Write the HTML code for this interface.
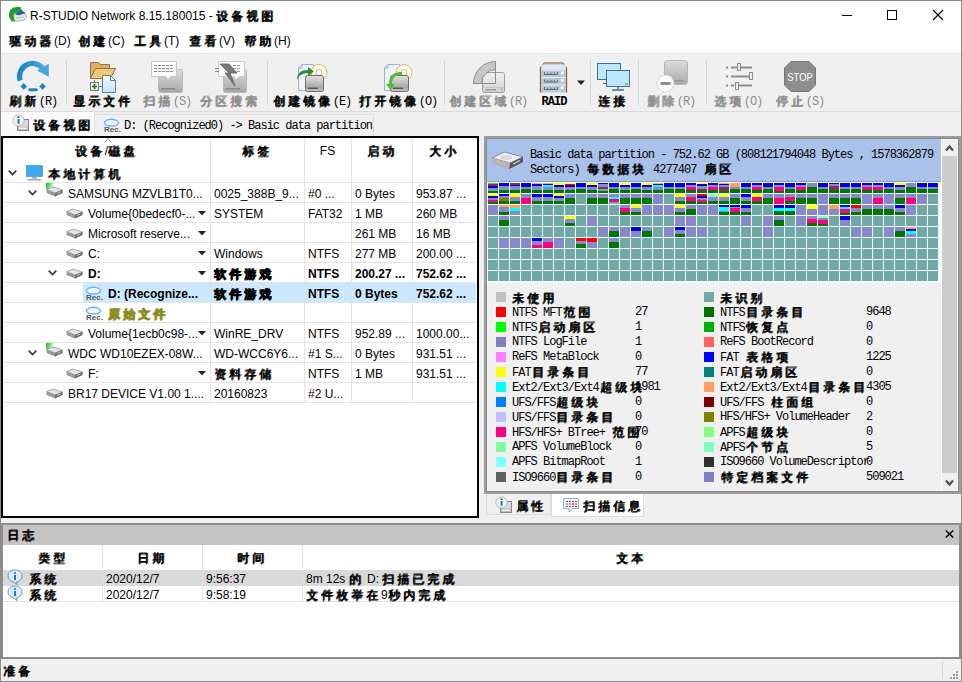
<!DOCTYPE html><html><head><meta charset="utf-8"><style>
*{box-sizing:border-box;margin:0;padding:0}
html,body{width:962px;height:682px;overflow:hidden;background:#f0f0f0}
body{position:relative;font-family:"Liberation Sans",sans-serif;font-size:12px;color:#000}
.a{position:absolute}
.t{position:absolute;white-space:nowrap;line-height:16px}
.m{font-family:"Liberation Mono",monospace;font-size:12px;letter-spacing:-1px;line-height:14px;position:absolute;white-space:nowrap}
.dis{color:#8c8c8c}
svg{position:absolute;overflow:visible}
.cell{position:absolute;width:10px;height:10px;display:flex;flex-direction:column;overflow:hidden}
.cell i{display:block}
.cj{letter-spacing:3px;text-shadow:1px 0 0 currentColor,0 1px 0 currentColor}
.m .cj{font-family:"Liberation Sans",sans-serif;letter-spacing:3px;margin-left:1px}
</style></head><body><div class="a" style="left:0px;top:0px;width:962px;height:53px;background:#fff"></div>
<div class="a" style="left:0px;top:53px;width:962px;height:1px;background:#e6e6e6"></div>
<svg style="left:8px;top:6px" width="19" height="17" viewBox="0 0 19 17">
<path d="M6 8.5 L17.5 7.5 L18.5 11 L17 14 L7.5 15.5 L5.5 13 Z" fill="#e3e9f0" stroke="#7f8a96" stroke-width="0.6"/>
<path d="M7 7.5 L13 3.5 L17.5 7 L10 9.5 Z" fill="#2a5fb5"/>
<path d="M1 9 C1 4 4 1 9 1 L12.5 1 L13.5 4 L9.5 6.5 C7 6.5 5.5 8 5.5 10 L7 15.5 L4 15.5 C2 13.5 1 11.5 1 9 Z" fill="#2b9c2b"/>
<path d="M8 12 L16 11" stroke="#aab4c0" stroke-width="0.8"/>
</svg>
<div class="t" style="left:30px;top:8px;">R-STUDIO Network 8.15.180015 - <span class="cj">设备视图</span></div>
<div class="a" style="left:842px;top:15px;width:10px;height:1px;background:#000"></div>
<div class="a" style="left:887px;top:10px;width:10px;height:10px;border:1px solid #000"></div>
<svg style="left:933px;top:10px" width="10" height="10" viewBox="0 0 10 10"><path d="M0 0 L10 10 M10 0 L0 10" stroke="#000" stroke-width="1.1"/></svg>
<div class="t" style="left:9px;top:33px;"><span class="cj">驱动器</span>(D)</div>
<div class="t" style="left:78px;top:33px;"><span class="cj">创建</span>(C)</div>
<div class="t" style="left:134px;top:33px;"><span class="cj">工具</span>(T)</div>
<div class="t" style="left:189px;top:33px;"><span class="cj">查看</span>(V)</div>
<div class="t" style="left:244px;top:33px;"><span class="cj">帮助</span>(H)</div>
<div class="a" style="left:0px;top:54px;width:962px;height:57px;background:#f0f0f0"></div>
<div class="a" style="left:0px;top:111px;width:962px;height:1px;background:#dadada"></div>
<div class="a" style="left:66px;top:60px;width:1px;height:45px;background:#d6d6d6"></div>
<div class="a" style="left:267px;top:60px;width:1px;height:45px;background:#d6d6d6"></div>
<div class="a" style="left:444px;top:60px;width:1px;height:45px;background:#d6d6d6"></div>
<div class="a" style="left:590px;top:60px;width:1px;height:45px;background:#d6d6d6"></div>
<div class="a" style="left:638px;top:60px;width:1px;height:45px;background:#d6d6d6"></div>
<div class="a" style="left:706px;top:60px;width:1px;height:45px;background:#d6d6d6"></div>
<div class="t" style="left:-17px;top:93px;width:100px;text-align:center"><span class="cj">刷新</span><span style="font-family:&quot;Liberation Mono&quot;,monospace;letter-spacing:-1px">(R)</span></div>
<div class="t" style="left:53px;top:93px;width:100px;text-align:center"><span class="cj">显示文件</span></div>
<div class="t dis" style="left:117px;top:93px;width:100px;text-align:center"><span class="cj">扫描</span><span style="font-family:&quot;Liberation Mono&quot;,monospace;letter-spacing:-1px">(S)</span></div>
<div class="t dis" style="left:180px;top:93px;width:100px;text-align:center"><span class="cj">分区搜索</span></div>
<div class="t" style="left:262px;top:93px;width:100px;text-align:center"><span class="cj">创建镜像</span><span style="font-family:&quot;Liberation Mono&quot;,monospace;letter-spacing:-1px">(E)</span></div>
<div class="t" style="left:348px;top:93px;width:100px;text-align:center"><span class="cj">打开镜像</span><span style="font-family:&quot;Liberation Mono&quot;,monospace;letter-spacing:-1px">(O)</span></div>
<div class="t dis" style="left:438px;top:93px;width:100px;text-align:center"><span class="cj">创建区域</span><span style="font-family:&quot;Liberation Mono&quot;,monospace;letter-spacing:-1px">(R)</span></div>
<div class="t" style="left:504px;top:93px;width:100px;text-align:center"><span style="font-family:&quot;Liberation Mono&quot;,monospace;letter-spacing:-1px;font-weight:bold">RAID</span></div>
<div class="t" style="left:563px;top:93px;width:100px;text-align:center"><span class="cj">连接</span></div>
<div class="t dis" style="left:621px;top:93px;width:100px;text-align:center"><span class="cj">删除</span><span style="font-family:&quot;Liberation Mono&quot;,monospace;letter-spacing:-1px">(R)</span></div>
<div class="t dis" style="left:688px;top:93px;width:100px;text-align:center"><span class="cj">选项</span><span style="font-family:&quot;Liberation Mono&quot;,monospace;letter-spacing:-1px">(O)</span></div>
<div class="t dis" style="left:750px;top:93px;width:100px;text-align:center"><span class="cj">停止</span><span style="font-family:&quot;Liberation Mono&quot;,monospace;letter-spacing:-1px">(S)</span></div>

<svg style="left:0;top:0" width="962" height="112" viewBox="0 0 962 112">
<defs>
<linearGradient id="gdrv" x1="0" y1="0" x2="0" y2="1"><stop offset="0" stop-color="#dcdcdc"/><stop offset="1" stop-color="#a8a8a8"/></linearGradient>
<linearGradient id="gdrv2" x1="0" y1="0" x2="0" y2="1"><stop offset="0" stop-color="#e2e2e2"/><stop offset="0.75" stop-color="#a8a8a8"/><stop offset="1" stop-color="#c8c8c8"/></linearGradient>
<linearGradient id="gdoc" x1="0" y1="0" x2="0" y2="1"><stop offset="0" stop-color="#f4f9fd"/><stop offset="1" stop-color="#c8e0f2"/></linearGradient>
</defs>
<!-- refresh -->
<linearGradient id="grf" x1="0" y1="0" x2="1" y2="0.3"><stop offset="0" stop-color="#1a7fc2"/><stop offset="1" stop-color="#4aaae2"/></linearGradient>
<path d="M20.2 80.7 A13 13 0 0 1 43.15 69.04" fill="none" stroke="url(#grf)" stroke-width="5.2"/>
<path d="M48.8 63.8 L48.8 76.8 L37 70.6 Z" fill="#45a6de"/>
<path d="M20.4 86.4 L23.7 83.1 L27 86.4 L23.7 89.7 Z" fill="#1f86c4"/>
<path d="M39.2 86.4 L42.5 83.1 L45.8 86.4 L42.5 89.7 Z" fill="#1f86c4"/>
<rect x="28.2" y="88.2" width="9.7" height="3" rx="1.5" fill="#1f86c4"/>
<!-- show files -->
<path d="M90.5 62.5 H98.5 L100.5 64.5 H109.5 V78.5 H90.5 Z" fill="#e2ad60" stroke="#8a7654"/>
<path d="M90.5 78.5 L95.5 68.5 H115.5 L110.5 78.5 Z" fill="#f2c877" stroke="#8a7654"/>
<path d="M102.5 75.5 H110.5 L115.5 80.5 V92.5 H102.5 Z" fill="url(#gdoc)" stroke="#5a7f8e"/>
<path d="M110.5 75.5 V80.5 H115.5" fill="none" stroke="#5a7f8e"/>
<rect x="90.5" y="82.5" width="8" height="8" fill="#e8f4e8" stroke="#777"/>
<path d="M94.5 84 V89 M92 86.5 H97" stroke="#1a7a1a" stroke-width="1.6"/>
<path d="M94.5 80 V82.5 M98.5 86.5 H102" stroke="#777"/>
<!-- scan (disabled) -->
<rect x="158.5" y="69.5" width="24" height="23" rx="2" fill="url(#gdrv)" stroke="#b8b8b8"/>
<rect x="161" y="88" width="14" height="1.5" fill="#8a8a8a"/>
<path d="M151.5 61.5 H176.5 V76.5 H171 L168 80 L166 76.5 H151.5 Z" fill="#fbfbfb" stroke="#c8c8c8"/>
<path d="M154 65.5h3 M158 65.5h3 M162 65.5h3 M166 65.5h3 M170 65.5h3 M154 68.5h3 M158 68.5h3 M162 68.5h3 M166 68.5h3 M170 68.5h3 M154 71.5h3 M158 71.5h3 M162 71.5h3 M166 71.5h3 M170 71.5h3" stroke="#8a8a8a" stroke-width="1.2"/>
<!-- partition search (disabled) -->
<rect x="223.5" y="69.5" width="23" height="23" rx="2" fill="url(#gdrv)" stroke="#b8b8b8"/>
<rect x="226" y="88" width="14" height="1.5" fill="#8a8a8a"/>
<path d="M218.5 61.5 H244.5 V76.5 H239 L236 80 L234 76.5 H218.5 Z" fill="#fbfbfb" stroke="#c8c8c8"/>
<path d="M233 65.5h3 M237 65.5h3 M233 68.5h3 M237 68.5h3 M233 71.5h3 M237 71.5h3" stroke="#9a9a9a" stroke-width="1.2"/>
<path d="M220 64 H229 L237 73 H230 L235 86 L225 73 H229 Z" fill="#7a7a7a" stroke="#5e5e5e" stroke-width="0.8"/>
<path d="M215 68.5h4 M215 71.5h4" stroke="#8a8a8a" stroke-width="1.2"/>
<!-- create image -->
<path d="M302 64.5 H313.5 V90.5 H298.5 V68 Z M302 64.5 V68 H298.5" fill="#eef4fb" stroke="#9bb1d0"/>
<circle cx="319" cy="72.5" r="8" fill="#fffbe6" stroke="#c9bb7a"/>
<circle cx="319" cy="72.5" r="3" fill="#fff" stroke="#c9bb7a"/>
<rect x="305.5" y="75.5" width="18" height="16" rx="2" fill="url(#gdrv2)" stroke="#6e6e6e"/>
<rect x="308" y="87.5" width="10" height="1.5" fill="#555"/>
<path d="M297 80 C297 73 301 70 308 70 V67 L314 71.5 L308 76 V73 C303 73 299 75 297 80 Z" fill="#2f8f2f"/>
<!-- open image -->
<path d="M388 64.5 H399.5 V90.5 H384.5 V68 Z M388 64.5 V68 H384.5" fill="#eef4fb" stroke="#9bb1d0"/>
<circle cx="404" cy="72.5" r="8" fill="#fffbe6" stroke="#c9bb7a"/>
<circle cx="404" cy="72.5" r="3" fill="#fff" stroke="#c9bb7a"/>
<rect x="390.5" y="75.5" width="18" height="16" rx="2" fill="url(#gdrv2)" stroke="#6e6e6e"/>
<rect x="393" y="87.5" width="10" height="1.5" fill="#555"/>
<path d="M402 72 C395 72 389 74 389 84 H386 L390.5 90 L395 84 H392 C392 77 396 75 402 75 Z" fill="#55b83a"/>
<!-- create region (disabled) -->
<linearGradient id="gcr" x1="0" y1="0" x2="0" y2="1"><stop offset="0" stop-color="#f2f2f2"/><stop offset="1" stop-color="#d2d2d2"/></linearGradient>
<rect x="482.5" y="72.5" width="22" height="20" rx="2" fill="url(#gcr)" stroke="#9c9c9c"/>
<path d="M483 87.5 H504" stroke="#c4c4c4"/>
<rect x="485" y="89" width="11" height="1.6" fill="#a0a0a0"/>
<rect x="501" y="88.6" width="1.6" height="1.6" fill="#a0a0a0"/>
<path d="M473.5 83.5 A22 22 0 0 1 495.5 61.5 V69.5 A14 14 0 0 0 481.5 83.5 Z" fill="#c6c6c6" stroke="#8c8c8c"/>
<path d="M481.5 83.5 H495.5 V69.5" fill="none" stroke="#8c8c8c"/>
<!-- RAID -->
<path d="M540.5 92.5 V68 L544 63.5 H563 L566.5 68 V92.5" fill="#c0cedb" stroke="#a9532c" stroke-width="1.3"/>
<rect x="544" y="62" width="19" height="2" fill="#b99a92"/>
<rect x="541.2" y="64.5" width="24.6" height="5" fill="#dfeaf5"/>
<rect x="541.2" y="69.5" width="24.6" height="7" fill="#b9c8d6"/><rect x="541.2" y="69.5" width="24.6" height="1" fill="#eaf1f8"/><path d="M544.5 72.0 V74.5 H557.5 V72.0 M547.7 72.5 V74.5 M551 72.5 V74.5 M554.3 72.5 V74.5" stroke="#5e6c7c" stroke-width="1" fill="none"/><rect x="561" y="71.5" width="2.6" height="2.6" fill="#fff"/><rect x="541.2" y="77" width="24.6" height="7" fill="#b9c8d6"/><rect x="541.2" y="77" width="24.6" height="1" fill="#eaf1f8"/><path d="M544.5 79.5 V82 H557.5 V79.5 M547.7 80 V82 M551 80 V82 M554.3 80 V82" stroke="#5e6c7c" stroke-width="1" fill="none"/><rect x="561" y="79" width="2.6" height="2.6" fill="#fff"/><rect x="541.2" y="84.5" width="24.6" height="7" fill="#b9c8d6"/><rect x="541.2" y="84.5" width="24.6" height="1" fill="#eaf1f8"/><path d="M544.5 87.0 V89.5 H557.5 V87.0 M547.7 87.5 V89.5 M551 87.5 V89.5 M554.3 87.5 V89.5" stroke="#5e6c7c" stroke-width="1" fill="none"/><rect x="561" y="86.5" width="2.6" height="2.6" fill="#fff"/>
<path d="M577 80.5 H585 L581 85 Z" fill="#222"/>
<!-- connect -->
<rect x="597.5" y="63.5" width="23" height="16" fill="#bfe6fb" stroke="#3b6e8f"/>
<path d="M607 80v3 M603 83.5h8" stroke="#3b6e8f"/>
<rect x="606.5" y="70.5" width="23" height="16" fill="#bfe6fb" stroke="#3b6e8f"/>
<path d="M618 86.5v3 M612 90h12" stroke="#3b6e8f" stroke-width="1.4"/>
<rect x="625" y="83" width="3" height="2" fill="#8bc34a"/>
<!-- delete (disabled) -->
<rect x="664.5" y="60.5" width="23" height="24" rx="3" fill="url(#gdrv)" stroke="#b5b5b5"/>
<rect x="670" y="80" width="14" height="1.5" fill="#999"/>
<circle cx="665.5" cy="83.5" r="8.5" fill="#fff" stroke="#d0d0d0"/>
<rect x="660.5" y="82" width="10" height="3" fill="#8c8c8c"/>
<!-- options (disabled) -->
<path d="M726 67.5h2 M731 67.5h6 M741 67.5h11 M726 76.5h2 M731 76.5h18 M726 85.5h2 M731 85.5h3 M739 85.5h13" stroke="#8c8c8c" stroke-width="1.8"/>
<rect x="737.5" y="63.5" width="3" height="7" fill="#ececec" stroke="#8c8c8c"/>
<rect x="749.5" y="72.5" width="3" height="7" fill="#ececec" stroke="#8c8c8c"/>
<rect x="735.5" y="82.5" width="3" height="7" fill="#ececec" stroke="#8c8c8c"/>
<!-- stop (disabled) -->
<path d="M791 61.5 H809 L815.5 68 V85 L809 91.5 H791 L784.5 85 V68 Z" fill="#8e8e8e" stroke="#777"/>
<text x="800" y="81" font-family="Liberation Sans" font-size="11" fill="#fff" text-anchor="middle" transform="translate(800 0) scale(0.85 1) translate(-800 0)">STOP</text>
</svg>

<div class="a" style="left:0px;top:112px;width:962px;height:24px;background:#f0f0f0"></div>
<div class="a" style="left:1px;top:112px;width:94px;height:24px;background:#fafafa;border-right:1px solid #dcdcdc"></div>
<div class="a" style="left:95px;top:114px;width:279px;height:22px;background:#f0f0f0;border:1px solid #dcdcdc;border-bottom:none;border-left:none"></div>
<svg style="left:12px;top:114px" width="18" height="18" viewBox="0 0 18 18">
<rect x="5.5" y="5.5" width="11" height="11" fill="#dadada" stroke="#8a8a8a"/><rect x="6.5" y="13" width="9" height="2.5" fill="#f2f2f2" stroke="#a0a0a0" stroke-width="0.6"/>
<circle cx="6.5" cy="6.5" r="5.6" fill="#eef3f8" stroke="#a8b4c4" stroke-width="0.9"/><rect x="5.6" y="5" width="1.9" height="4.8" fill="#3b6d85"/><rect x="5.6" y="2.4" width="1.9" height="1.6" fill="#3b5560"/>
</svg>
<div class="t" style="left:33px;top:117px;"><span class="cj">设备视图</span></div>
<svg style="left:103px;top:116px" width="18" height="18" viewBox="0 0 18 18">
<path d="M1.5 6 L4 4 L8.5 3 L13 4 L15.5 6 L15.5 7.5 L13 9.5 L8.5 10 L4 9.5 L1.5 7.5 Z" fill="#eef7ff" stroke="#6cb4ee" stroke-width="1.3"/>
<text x="1" y="15.5" font-family="Liberation Sans" font-size="8" font-weight="bold" fill="#505a60">Rec.</text>
</svg>
<div class="m" style="left:124px;top:119px;">D: (Recognized0) -&gt; Basic data partition</div>
<div class="a" style="left:1px;top:136px;width:478px;height:382px;background:#fff;border:2px solid #000"></div>
<div class="t" style="left:3px;top:143px;width:207px;text-align:center"><span class="cj">设备</span>/<span class="cj">磁盘</span></div>
<svg style="left:104px;top:138px" width="8" height="5" viewBox="0 0 8 5"><path d="M0.5 4.5 L4 0.8 L7.5 4.5" fill="none" stroke="#8a8a8a"/></svg>
<div class="t" style="left:210px;top:143px;width:94px;text-align:center"><span class="cj">标签</span></div>
<div class="t" style="left:304px;top:143px;width:47px;text-align:center">FS</div>
<div class="t" style="left:351px;top:143px;width:61px;text-align:center"><span class="cj">启动</span></div>
<div class="t" style="left:412px;top:143px;width:64px;text-align:center"><span class="cj">大小</span></div>
<div class="a" style="left:210px;top:138px;width:1px;height:265px;background:#e4e4e4"></div>
<div class="a" style="left:304px;top:138px;width:1px;height:265px;background:#e4e4e4"></div>
<div class="a" style="left:351px;top:138px;width:1px;height:265px;background:#e4e4e4"></div>
<div class="a" style="left:412px;top:138px;width:1px;height:265px;background:#e4e4e4"></div>
<div class="a" style="left:3px;top:182px;width:473px;height:1px;background:#e4e4e4"></div>
<div class="a" style="left:3px;top:202px;width:473px;height:1px;background:#e4e4e4"></div>
<div class="a" style="left:3px;top:222px;width:473px;height:1px;background:#e4e4e4"></div>
<div class="a" style="left:3px;top:242px;width:473px;height:1px;background:#e4e4e4"></div>
<div class="a" style="left:3px;top:262px;width:473px;height:1px;background:#e4e4e4"></div>
<div class="a" style="left:3px;top:282px;width:473px;height:1px;background:#e4e4e4"></div>
<div class="a" style="left:3px;top:302px;width:473px;height:1px;background:#e4e4e4"></div>
<div class="a" style="left:3px;top:322px;width:473px;height:1px;background:#e4e4e4"></div>
<div class="a" style="left:3px;top:342px;width:473px;height:1px;background:#e4e4e4"></div>
<div class="a" style="left:3px;top:362px;width:473px;height:1px;background:#e4e4e4"></div>
<div class="a" style="left:3px;top:382px;width:473px;height:1px;background:#e4e4e4"></div>
<div class="a" style="left:3px;top:402px;width:473px;height:1px;background:#e4e4e4"></div>
<div class="a" style="left:83px;top:283px;width:393px;height:19px;background:#cce8ff"></div>
<svg style="left:8px;top:170px" width="9" height="6" viewBox="0 0 9 6"><path d="M0.7 0.7 L4.5 4.5 L8.3 0.7" fill="none" stroke="#3a3a3a" stroke-width="1.7"/></svg>
<svg style="left:26px;top:165px" width="17" height="16" viewBox="0 0 17 16"><rect x="0.5" y="0.5" width="16" height="11" fill="#3ea8f0" stroke="#2e8ad0" stroke-width="0.6"/><rect x="6" y="12" width="5" height="1.5" fill="#9aa"/><rect x="2" y="14" width="13" height="1.5" fill="#9aa"/></svg>
<div class="t" style="left:48px;top:166px;color:#000"><span class="cj">本地计算机</span></div>
<svg style="left:28px;top:190px" width="9" height="6" viewBox="0 0 9 6"><path d="M0.7 0.7 L4.5 4.5 L8.3 0.7" fill="none" stroke="#3a3a3a" stroke-width="1.7"/></svg>
<svg style="left:46px;top:185px" width="17" height="12" viewBox="0 0 17 12">
<defs><linearGradient id="gg" x1="0" y1="0" x2="1" y2="0.4"><stop offset="0" stop-color="#20b020"/><stop offset="0.5" stop-color="#70e070"/><stop offset="1" stop-color="#d8f8d8" stop-opacity="0"/></linearGradient></defs><rect x="0" y="-2" width="9" height="7" fill="url(#gg)"/><path d="M0.5 4.5 L7 2 L16.5 5 L16.5 8 L9 11.5 L0.5 8 Z" fill="#9a9a9a"/>
<path d="M0.5 4.5 L7 2 L16.5 5 L9 8 Z" fill="#e4e4e4" stroke="#8a8a8a" stroke-width="0.6"/>
<path d="M9 8 L16.5 5 L16.5 8 L9 11.5 Z" fill="#6f6f6f"/>
<path d="M11 8.5 L14.5 7" stroke="#ddd" stroke-width="0.8"/>
</svg>
<div class="t" style="left:68px;top:186px;color:#000">SAMSUNG MZVLB1T0...</div>
<div class="t" style="left:214px;top:186px;">0025_388B_9...</div>
<div class="t" style="left:308px;top:186px;">#0 ...</div>
<div class="t" style="left:355px;top:186px;">0 Bytes</div>
<div class="t" style="left:416px;top:186px;">953.87 ...</div>
<svg style="left:66px;top:207px" width="17" height="12" viewBox="0 0 17 12">
<path d="M0.5 4.5 L7 2 L16.5 5 L16.5 8 L9 11.5 L0.5 8 Z" fill="#9a9a9a"/>
<path d="M0.5 4.5 L7 2 L16.5 5 L9 8 Z" fill="#e4e4e4" stroke="#8a8a8a" stroke-width="0.6"/>
<path d="M9 8 L16.5 5 L16.5 8 L9 11.5 Z" fill="#6f6f6f"/>
<path d="M11 8.5 L14.5 7" stroke="#ddd" stroke-width="0.8"/>
</svg>
<div class="t" style="left:88px;top:206px;color:#000">Volume{0bedecf0-...</div>
<svg style="left:198px;top:211px" width="8" height="5" viewBox="0 0 8 5"><path d="M0 0 H8 L4 4.5 Z" fill="#222"/></svg>
<div class="t" style="left:214px;top:206px;">SYSTEM</div>
<div class="t" style="left:308px;top:206px;">FAT32</div>
<div class="t" style="left:355px;top:206px;">1 MB</div>
<div class="t" style="left:416px;top:206px;">260 MB</div>
<svg style="left:66px;top:227px" width="17" height="12" viewBox="0 0 17 12">
<path d="M0.5 4.5 L7 2 L16.5 5 L16.5 8 L9 11.5 L0.5 8 Z" fill="#9a9a9a"/>
<path d="M0.5 4.5 L7 2 L16.5 5 L9 8 Z" fill="#e4e4e4" stroke="#8a8a8a" stroke-width="0.6"/>
<path d="M9 8 L16.5 5 L16.5 8 L9 11.5 Z" fill="#6f6f6f"/>
<path d="M11 8.5 L14.5 7" stroke="#ddd" stroke-width="0.8"/>
</svg>
<div class="t" style="left:88px;top:226px;color:#000">Microsoft reserve...</div>
<svg style="left:198px;top:231px" width="8" height="5" viewBox="0 0 8 5"><path d="M0 0 H8 L4 4.5 Z" fill="#222"/></svg>
<div class="t" style="left:355px;top:226px;">261 MB</div>
<div class="t" style="left:416px;top:226px;">16 MB</div>
<svg style="left:66px;top:247px" width="17" height="12" viewBox="0 0 17 12">
<path d="M0.5 4.5 L7 2 L16.5 5 L16.5 8 L9 11.5 L0.5 8 Z" fill="#9a9a9a"/>
<path d="M0.5 4.5 L7 2 L16.5 5 L9 8 Z" fill="#e4e4e4" stroke="#8a8a8a" stroke-width="0.6"/>
<path d="M9 8 L16.5 5 L16.5 8 L9 11.5 Z" fill="#6f6f6f"/>
<path d="M11 8.5 L14.5 7" stroke="#ddd" stroke-width="0.8"/>
</svg>
<div class="t" style="left:88px;top:246px;color:#000">C:</div>
<svg style="left:198px;top:251px" width="8" height="5" viewBox="0 0 8 5"><path d="M0 0 H8 L4 4.5 Z" fill="#222"/></svg>
<div class="t" style="left:214px;top:246px;">Windows</div>
<div class="t" style="left:308px;top:246px;">NTFS</div>
<div class="t" style="left:355px;top:246px;">277 MB</div>
<div class="t" style="left:416px;top:246px;">200.00 ...</div>
<svg style="left:48px;top:270px" width="9" height="6" viewBox="0 0 9 6"><path d="M0.7 0.7 L4.5 4.5 L8.3 0.7" fill="none" stroke="#3a3a3a" stroke-width="1.7"/></svg>
<svg style="left:66px;top:267px" width="17" height="12" viewBox="0 0 17 12">
<path d="M0.5 4.5 L7 2 L16.5 5 L16.5 8 L9 11.5 L0.5 8 Z" fill="#9a9a9a"/>
<path d="M0.5 4.5 L7 2 L16.5 5 L9 8 Z" fill="#e4e4e4" stroke="#8a8a8a" stroke-width="0.6"/>
<path d="M9 8 L16.5 5 L16.5 8 L9 11.5 Z" fill="#6f6f6f"/>
<path d="M11 8.5 L14.5 7" stroke="#ddd" stroke-width="0.8"/>
</svg>
<div class="t" style="left:88px;top:266px;font-weight:bold;color:#000">D:</div>
<svg style="left:198px;top:271px" width="8" height="5" viewBox="0 0 8 5"><path d="M0 0 H8 L4 4.5 Z" fill="#222"/></svg>
<div class="t" style="left:214px;top:266px;font-weight:bold;"><span class="cj">软件游戏</span></div>
<div class="t" style="left:308px;top:266px;font-weight:bold;">NTFS</div>
<div class="t" style="left:355px;top:266px;font-weight:bold;">200.27 ...</div>
<div class="t" style="left:416px;top:266px;font-weight:bold;">752.62 ...</div>
<svg style="left:85px;top:284px" width="18" height="18" viewBox="0 0 18 18">
<path d="M1.5 6 L4 4 L8.5 3 L13 4 L15.5 6 L15.5 7.5 L13 9.5 L8.5 10 L4 9.5 L1.5 7.5 Z" fill="#eef7ff" stroke="#6cb4ee" stroke-width="1.3"/>
<text x="1" y="15.5" font-family="Liberation Sans" font-size="8" font-weight="bold" fill="#505a60">Rec.</text>
</svg>
<div class="t" style="left:108px;top:286px;font-weight:bold;color:#000">D: (Recognize...</div>
<div class="t" style="left:214px;top:286px;font-weight:bold;"><span class="cj">软件游戏</span></div>
<div class="t" style="left:308px;top:286px;font-weight:bold;">NTFS</div>
<div class="t" style="left:355px;top:286px;font-weight:bold;">0 Bytes</div>
<div class="t" style="left:416px;top:286px;font-weight:bold;">752.62 ...</div>
<svg style="left:85px;top:304px" width="18" height="18" viewBox="0 0 18 18">
<path d="M1.5 6 L4 4 L8.5 3 L13 4 L15.5 6 L15.5 7.5 L13 9.5 L8.5 10 L4 9.5 L1.5 7.5 Z" fill="#eef7ff" stroke="#6cb4ee" stroke-width="1.3"/>
<text x="1" y="15.5" font-family="Liberation Sans" font-size="8" font-weight="bold" fill="#505a60">Rec.</text>
</svg>
<div class="t" style="left:108px;top:306px;font-weight:bold;color:#8b8b1e"><span class="cj">原始文件</span></div>
<svg style="left:66px;top:327px" width="17" height="12" viewBox="0 0 17 12">
<path d="M0.5 4.5 L7 2 L16.5 5 L16.5 8 L9 11.5 L0.5 8 Z" fill="#9a9a9a"/>
<path d="M0.5 4.5 L7 2 L16.5 5 L9 8 Z" fill="#e4e4e4" stroke="#8a8a8a" stroke-width="0.6"/>
<path d="M9 8 L16.5 5 L16.5 8 L9 11.5 Z" fill="#6f6f6f"/>
<path d="M11 8.5 L14.5 7" stroke="#ddd" stroke-width="0.8"/>
</svg>
<div class="t" style="left:88px;top:326px;color:#000">Volume{1ecb0c98-...</div>
<svg style="left:198px;top:331px" width="8" height="5" viewBox="0 0 8 5"><path d="M0 0 H8 L4 4.5 Z" fill="#222"/></svg>
<div class="t" style="left:214px;top:326px;">WinRE_DRV</div>
<div class="t" style="left:308px;top:326px;">NTFS</div>
<div class="t" style="left:355px;top:326px;">952.89 ...</div>
<div class="t" style="left:416px;top:326px;">1000.00...</div>
<svg style="left:28px;top:350px" width="9" height="6" viewBox="0 0 9 6"><path d="M0.7 0.7 L4.5 4.5 L8.3 0.7" fill="none" stroke="#3a3a3a" stroke-width="1.7"/></svg>
<svg style="left:46px;top:345px" width="17" height="12" viewBox="0 0 17 12">
<defs><linearGradient id="gg" x1="0" y1="0" x2="1" y2="0.4"><stop offset="0" stop-color="#20b020"/><stop offset="0.5" stop-color="#70e070"/><stop offset="1" stop-color="#d8f8d8" stop-opacity="0"/></linearGradient></defs><rect x="0" y="-2" width="9" height="7" fill="url(#gg)"/><path d="M0.5 4.5 L7 2 L16.5 5 L16.5 8 L9 11.5 L0.5 8 Z" fill="#9a9a9a"/>
<path d="M0.5 4.5 L7 2 L16.5 5 L9 8 Z" fill="#e4e4e4" stroke="#8a8a8a" stroke-width="0.6"/>
<path d="M9 8 L16.5 5 L16.5 8 L9 11.5 Z" fill="#6f6f6f"/>
<path d="M11 8.5 L14.5 7" stroke="#ddd" stroke-width="0.8"/>
</svg>
<div class="t" style="left:68px;top:346px;color:#000">WDC WD10EZEX-08W...</div>
<div class="t" style="left:214px;top:346px;">WD-WCC6Y6...</div>
<div class="t" style="left:308px;top:346px;">#1 S...</div>
<div class="t" style="left:355px;top:346px;">0 Bytes</div>
<div class="t" style="left:416px;top:346px;">931.51 ...</div>
<svg style="left:66px;top:367px" width="17" height="12" viewBox="0 0 17 12">
<path d="M0.5 4.5 L7 2 L16.5 5 L16.5 8 L9 11.5 L0.5 8 Z" fill="#9a9a9a"/>
<path d="M0.5 4.5 L7 2 L16.5 5 L9 8 Z" fill="#e4e4e4" stroke="#8a8a8a" stroke-width="0.6"/>
<path d="M9 8 L16.5 5 L16.5 8 L9 11.5 Z" fill="#6f6f6f"/>
<path d="M11 8.5 L14.5 7" stroke="#ddd" stroke-width="0.8"/>
</svg>
<div class="t" style="left:88px;top:366px;color:#000">F:</div>
<svg style="left:198px;top:371px" width="8" height="5" viewBox="0 0 8 5"><path d="M0 0 H8 L4 4.5 Z" fill="#222"/></svg>
<div class="t" style="left:214px;top:366px;"><span class="cj">资料存储</span></div>
<div class="t" style="left:308px;top:366px;">NTFS</div>
<div class="t" style="left:355px;top:366px;">1 MB</div>
<div class="t" style="left:416px;top:366px;">931.51 ...</div>
<svg style="left:46px;top:387px" width="17" height="12" viewBox="0 0 17 12">
<path d="M0.5 4.5 L7 2 L16.5 5 L16.5 8 L9 11.5 L0.5 8 Z" fill="#9a9a9a"/>
<path d="M0.5 4.5 L7 2 L16.5 5 L9 8 Z" fill="#e4e4e4" stroke="#8a8a8a" stroke-width="0.6"/>
<path d="M9 8 L16.5 5 L16.5 8 L9 11.5 Z" fill="#6f6f6f"/>
<path d="M11 8.5 L14.5 7" stroke="#ddd" stroke-width="0.8"/>
</svg>
<div class="t" style="left:68px;top:386px;color:#000">BR17 DEVICE V1.00 1....</div>
<div class="t" style="left:214px;top:386px;">20160823</div>
<div class="t" style="left:308px;top:386px;">#2 U...</div>
<div class="a" style="left:484px;top:136px;width:477px;height:358px;background:#f0f0f0;border:2px solid #9c9c9c;box-shadow:inset 0 0 0 1px #868b94"></div>
<div class="a" style="left:487px;top:139px;width:454px;height:43px;background:#a9c2ea"></div>
<div class="a" style="left:487px;top:181px;width:454px;height:1px;background:#8e9cb4"></div>
<svg style="left:491px;top:150px" width="34" height="20" viewBox="0 0 34 20">
<path d="M1 8 L13 2 L32 7 L32 12 L18 19 L1 13 Z" fill="#8a8a8a"/>
<path d="M1 8 L13 2 L32 7 L19 13 Z" fill="#efefef" stroke="#7a7a7a" stroke-width="0.8"/>
<path d="M19 13 L32 7 L32 12 L18 19 Z" fill="#5a5a5a"/>
<path d="M1 8 L19 13 L18 19 L1 13 Z" fill="#b8b8b8"/>
<ellipse cx="15" cy="7.5" rx="6" ry="2.6" fill="#d9d9d9"/>
<path d="M22 14 L29 10.5" stroke="#cfcfcf" stroke-width="1.2"/>
</svg>
<div class="m" style="left:530px;top:148px;">Basic data partition - 752.62 GB (808121794048 Bytes , 1578362879</div>
<div class="m" style="left:530px;top:162px;">Sectors) <span style="letter-spacing:0"><span class="cj">每数据块</span></span> 4277407 <span style="letter-spacing:0"><span class="cj">扇区</span></span></div>
<div class="a" style="left:487px;top:182px;width:454px;height:101px;background:#f4ffff"></div>
<div class="cell" style="left:488px;top:183px"><i style="flex:1;background:#60c040"></i><i style="flex:2;background:#803050"></i><i style="flex:2;background:#0000e0"></i><i style="flex:2;background:#8888cc"></i><i style="flex:1;background:#70a8a8"></i><i style="flex:2;background:#007800"></i></div>
<div class="cell" style="left:499px;top:183px"><i style="flex:3;background:#0000e0"></i><i style="flex:2;background:#8888cc"></i><i style="flex:1;background:#70a8a8"></i><i style="flex:3;background:#007800"></i></div>
<div class="cell" style="left:510px;top:183px"><i style="flex:2;background:#803050"></i><i style="flex:1;background:#0000e0"></i><i style="flex:3;background:#8888cc"></i><i style="flex:3;background:#007800"></i></div>
<div class="cell" style="left:521px;top:183px"><i style="flex:3;background:#0000e0"></i><i style="flex:2;background:#8888cc"></i><i style="flex:3;background:#007800"></i></div>
<div class="cell" style="left:532px;top:183px"><i style="flex:1;background:#ffa060"></i><i style="flex:2;background:#0000e0"></i><i style="flex:2;background:#8888cc"></i><i style="flex:1;background:#70a8a8"></i><i style="flex:3;background:#007800"></i></div>
<div class="cell" style="left:543px;top:183px"><i style="flex:1;background:#ffa060"></i><i style="flex:1;background:#0000e0"></i><i style="flex:2;background:#00ffff"></i><i style="flex:2;background:#8888cc"></i><i style="flex:3;background:#007800"></i></div>
<div class="cell" style="left:554px;top:183px"><i style="flex:2;background:#ffff00"></i><i style="flex:2;background:#0000e0"></i><i style="flex:2;background:#8888cc"></i><i style="flex:3;background:#007800"></i></div>
<div class="cell" style="left:565px;top:183px"><i style="flex:1;background:#ffff00"></i><i style="flex:1;background:#ff0000"></i><i style="flex:2;background:#0000e0"></i><i style="flex:2;background:#8888cc"></i><i style="flex:3;background:#007800"></i></div>
<div class="cell" style="left:576px;top:183px"><i style="flex:3;background:#0000e0"></i><i style="flex:2;background:#8888cc"></i><i style="flex:3;background:#007800"></i></div>
<div class="cell" style="left:587px;top:183px"><i style="flex:2;background:#ffff00"></i><i style="flex:2;background:#0000e0"></i><i style="flex:2;background:#8888cc"></i><i style="flex:3;background:#007800"></i></div>
<div class="cell" style="left:598px;top:183px"><i style="flex:1;background:#0000e0"></i><i style="flex:2;background:#8888cc"></i><i style="flex:2;background:#803050"></i><i style="flex:1;background:#70a8a8"></i><i style="flex:2;background:#007800"></i></div>
<div class="cell" style="left:609px;top:183px"><i style="flex:3;background:#0000e0"></i><i style="flex:2;background:#8888cc"></i><i style="flex:3;background:#007800"></i></div>
<div class="cell" style="left:620px;top:183px"><i style="flex:2;background:#ffff00"></i><i style="flex:2;background:#0000e0"></i><i style="flex:2;background:#8888cc"></i><i style="flex:3;background:#007800"></i></div>
<div class="cell" style="left:631px;top:183px"><i style="flex:3;background:#0000e0"></i><i style="flex:2;background:#8888cc"></i><i style="flex:3;background:#007800"></i></div>
<div class="cell" style="left:642px;top:183px"><i style="flex:2;background:#ffff00"></i><i style="flex:2;background:#0000e0"></i><i style="flex:2;background:#8888cc"></i><i style="flex:3;background:#007800"></i></div>
<div class="cell" style="left:653px;top:183px"><i style="flex:1;background:#ffa060"></i><i style="flex:1;background:#0000e0"></i><i style="flex:2;background:#00ffff"></i><i style="flex:2;background:#8888cc"></i><i style="flex:3;background:#007800"></i></div>
<div class="cell" style="left:664px;top:183px"><i style="flex:3;background:#0000e0"></i><i style="flex:2;background:#8888cc"></i><i style="flex:3;background:#007800"></i></div>
<div class="cell" style="left:675px;top:183px"><i style="flex:3;background:#0000e0"></i><i style="flex:2;background:#8888cc"></i><i style="flex:3;background:#007800"></i></div>
<div class="cell" style="left:686px;top:183px"><i style="flex:2;background:#0000e0"></i><i style="flex:2;background:#8888cc"></i><i style="flex:2;background:#ff0080"></i><i style="flex:3;background:#007800"></i></div>
<div class="cell" style="left:697px;top:183px"><i style="flex:1;background:#ffff00"></i><i style="flex:2;background:#0000e0"></i><i style="flex:2;background:#8888cc"></i><i style="flex:2;background:#803050"></i><i style="flex:2;background:#007800"></i></div>
<div class="cell" style="left:708px;top:183px"><i style="flex:2;background:#0000e0"></i><i style="flex:2;background:#8888cc"></i><i style="flex:2;background:#ff0080"></i><i style="flex:3;background:#007800"></i></div>
<div class="cell" style="left:719px;top:183px"><i style="flex:1;background:#ffa060"></i><i style="flex:1;background:#0000e0"></i><i style="flex:2;background:#8888cc"></i><i style="flex:3;background:#803050"></i><i style="flex:2;background:#007800"></i></div>
<div class="cell" style="left:730px;top:183px"><i style="flex:3;background:#ffa060"></i><i style="flex:2;background:#8888cc"></i><i style="flex:3;background:#007800"></i></div>
<div class="cell" style="left:741px;top:183px"><i style="flex:3;background:#0000e0"></i><i style="flex:2;background:#8888cc"></i><i style="flex:3;background:#007800"></i></div>
<div class="cell" style="left:752px;top:183px"><i style="flex:2;background:#0000e0"></i><i style="flex:2;background:#8888cc"></i><i style="flex:2;background:#ff0080"></i><i style="flex:3;background:#007800"></i></div>
<div class="cell" style="left:763px;top:183px"><i style="flex:3;background:#0000e0"></i><i style="flex:2;background:#8888cc"></i><i style="flex:3;background:#007800"></i></div>
<div class="cell" style="left:774px;top:183px"><i style="flex:2;background:#0000e0"></i><i style="flex:2;background:#8888cc"></i><i style="flex:3;background:#ff0080"></i><i style="flex:2;background:#007800"></i></div>
<div class="cell" style="left:785px;top:183px"><i style="flex:3;background:#0000e0"></i><i style="flex:2;background:#8888cc"></i><i style="flex:3;background:#007800"></i></div>
<div class="cell" style="left:796px;top:183px"><i style="flex:2;background:#0000e0"></i><i style="flex:2;background:#8888cc"></i><i style="flex:2;background:#ff0080"></i><i style="flex:3;background:#007800"></i></div>
<div class="cell" style="left:807px;top:183px"><i style="flex:4;background:#8888cc"></i><i style="flex:5;background:#007800"></i></div>
<div class="cell" style="left:818px;top:183px"><i style="flex:3;background:#0000e0"></i><i style="flex:2;background:#8888cc"></i><i style="flex:3;background:#007800"></i></div>
<div class="cell" style="left:829px;top:183px"><i style="flex:1;background:#0000e0"></i><i style="flex:2;background:#8888cc"></i><i style="flex:3;background:#803050"></i><i style="flex:3;background:#007800"></i></div>
<div class="cell" style="left:840px;top:183px"><i style="flex:3;background:#0000e0"></i><i style="flex:2;background:#8888cc"></i><i style="flex:3;background:#007800"></i></div>
<div class="cell" style="left:851px;top:183px"><i style="flex:3;background:#0000e0"></i><i style="flex:2;background:#8888cc"></i><i style="flex:3;background:#007800"></i></div>
<div class="cell" style="left:862px;top:183px"><i style="flex:2;background:#0000e0"></i><i style="flex:2;background:#8888cc"></i><i style="flex:2;background:#ff0080"></i><i style="flex:3;background:#007800"></i></div>
<div class="cell" style="left:873px;top:183px"><i style="flex:2;background:#0000e0"></i><i style="flex:2;background:#8888cc"></i><i style="flex:2;background:#ff0080"></i><i style="flex:3;background:#007800"></i></div>
<div class="cell" style="left:884px;top:183px"><i style="flex:3;background:#0000e0"></i><i style="flex:2;background:#8888cc"></i><i style="flex:3;background:#007800"></i></div>
<div class="cell" style="left:895px;top:183px"><i style="flex:2;background:#ffff00"></i><i style="flex:2;background:#0000e0"></i><i style="flex:2;background:#8888cc"></i><i style="flex:3;background:#007800"></i></div>
<div class="cell" style="left:906px;top:183px"><i style="flex:4;background:#8888cc"></i><i style="flex:5;background:#007800"></i></div>
<div class="cell" style="left:917px;top:183px"><i style="flex:3;background:#0000e0"></i><i style="flex:2;background:#8888cc"></i><i style="flex:3;background:#007800"></i></div>
<div class="cell" style="left:928px;top:183px"><i style="flex:3;background:#0000e0"></i><i style="flex:2;background:#8888cc"></i><i style="flex:3;background:#007800"></i></div>
<div class="cell" style="left:488px;top:194px"><i style="flex:2;background:#ffff00"></i><i style="flex:2;background:#0000e0"></i><i style="flex:1;background:#8888cc"></i><i style="flex:2;background:#ff0080"></i><i style="flex:2;background:#007800"></i></div>
<div class="cell" style="left:499px;top:194px"><i style="flex:2;background:#0000e0"></i><i style="flex:2;background:#8888cc"></i><i style="flex:2;background:#808000"></i><i style="flex:3;background:#007800"></i></div>
<div class="cell" style="left:510px;top:194px"><i style="flex:3;background:#ffff00"></i><i style="flex:3;background:#8888cc"></i><i style="flex:3;background:#007800"></i></div>
<div class="cell" style="left:521px;top:194px"><i style="flex:4;background:#8888cc"></i><i style="flex:5;background:#ff0080"></i></div>
<div class="cell" style="left:532px;top:194px"><i style="flex:3;background:#0000e0"></i><i style="flex:3;background:#8888cc"></i><i style="flex:3;background:#007800"></i></div>
<div class="cell" style="left:543px;top:194px"><i style="flex:3;background:#0000e0"></i><i style="flex:3;background:#8888cc"></i><i style="flex:3;background:#007800"></i></div>
<div class="cell" style="left:554px;top:194px"><i style="flex:2;background:#ffff00"></i><i style="flex:2;background:#0000e0"></i><i style="flex:2;background:#8888cc"></i><i style="flex:3;background:#007800"></i></div>
<div class="cell" style="left:565px;top:194px"><i style="flex:4;background:#8888cc"></i><i style="flex:5;background:#007800"></i></div>
<div class="a" style="left:576px;top:194px;width:10px;height:10px;background:#70a8a8"></div>
<div class="cell" style="left:587px;top:194px"><i style="flex:4;background:#8888cc"></i><i style="flex:5;background:#007800"></i></div>
<div class="cell" style="left:598px;top:194px"><i style="flex:4;background:#8888cc"></i><i style="flex:5;background:#007800"></i></div>
<div class="cell" style="left:609px;top:194px"><i style="flex:3;background:#8888cc"></i><i style="flex:2;background:#00ffff"></i><i style="flex:3;background:#ff0080"></i><i style="flex:2;background:#70a8a8"></i></div>
<div class="cell" style="left:620px;top:194px"><i style="flex:4;background:#8888cc"></i><i style="flex:5;background:#007800"></i></div>
<div class="cell" style="left:631px;top:194px"><i style="flex:4;background:#8888cc"></i><i style="flex:5;background:#007800"></i></div>
<div class="cell" style="left:642px;top:194px"><i style="flex:4;background:#8888cc"></i><i style="flex:5;background:#007800"></i></div>
<div class="a" style="left:653px;top:194px;width:10px;height:10px;background:#8888cc"></div>
<div class="a" style="left:664px;top:194px;width:10px;height:10px;background:#70a8a8"></div>
<div class="cell" style="left:675px;top:194px"><i style="flex:3;background:#ffff00"></i><i style="flex:3;background:#8888cc"></i><i style="flex:3;background:#007800"></i></div>
<div class="cell" style="left:686px;top:194px"><i style="flex:3;background:#8888cc"></i><i style="flex:3;background:#ff0080"></i><i style="flex:3;background:#007800"></i></div>
<div class="cell" style="left:697px;top:194px"><i style="flex:2;background:#ff0000"></i><i style="flex:2;background:#0000e0"></i><i style="flex:2;background:#8888cc"></i><i style="flex:2;background:#ff0080"></i><i style="flex:2;background:#007800"></i></div>
<div class="cell" style="left:708px;top:194px"><i style="flex:3;background:#80ffc0"></i><i style="flex:3;background:#8888cc"></i><i style="flex:3;background:#007800"></i></div>
<div class="cell" style="left:719px;top:194px"><i style="flex:3;background:#ffff00"></i><i style="flex:3;background:#8888cc"></i><i style="flex:3;background:#007800"></i></div>
<div class="cell" style="left:730px;top:194px"><i style="flex:4;background:#8888cc"></i><i style="flex:5;background:#007800"></i></div>
<div class="cell" style="left:741px;top:194px"><i style="flex:3;background:#0000e0"></i><i style="flex:3;background:#8888cc"></i><i style="flex:3;background:#007800"></i></div>
<div class="cell" style="left:752px;top:194px"><i style="flex:3;background:#ffff00"></i><i style="flex:3;background:#ff0080"></i><i style="flex:3;background:#007800"></i></div>
<div class="cell" style="left:763px;top:194px"><i style="flex:4;background:#8888cc"></i><i style="flex:5;background:#007800"></i></div>
<div class="cell" style="left:774px;top:194px"><i style="flex:4;background:#8888cc"></i><i style="flex:5;background:#ff0080"></i></div>
<div class="cell" style="left:785px;top:194px"><i style="flex:3;background:#8888cc"></i><i style="flex:3;background:#ff0080"></i><i style="flex:3;background:#007800"></i></div>
<div class="cell" style="left:796px;top:194px"><i style="flex:4;background:#8888cc"></i><i style="flex:5;background:#007800"></i></div>
<div class="cell" style="left:807px;top:194px"><i style="flex:4;background:#8888cc"></i><i style="flex:5;background:#007800"></i></div>
<div class="a" style="left:818px;top:194px;width:10px;height:10px;background:#8888cc"></div>
<div class="cell" style="left:829px;top:194px"><i style="flex:4;background:#8888cc"></i><i style="flex:5;background:#007800"></i></div>
<div class="cell" style="left:840px;top:194px"><i style="flex:4;background:#8888cc"></i><i style="flex:5;background:#007800"></i></div>
<div class="cell" style="left:851px;top:194px"><i style="flex:4;background:#8888cc"></i><i style="flex:5;background:#007800"></i></div>
<div class="a" style="left:862px;top:194px;width:10px;height:10px;background:#8888cc"></div>
<div class="cell" style="left:873px;top:194px"><i style="flex:4;background:#8888cc"></i><i style="flex:5;background:#ff0080"></i></div>
<div class="a" style="left:884px;top:194px;width:10px;height:10px;background:#8888cc"></div>
<div class="cell" style="left:895px;top:194px"><i style="flex:4;background:#8888cc"></i><i style="flex:5;background:#007800"></i></div>
<div class="cell" style="left:906px;top:194px"><i style="flex:4;background:#8888cc"></i><i style="flex:5;background:#ff0080"></i></div>
<div class="a" style="left:917px;top:194px;width:10px;height:10px;background:#8888cc"></div>
<div class="a" style="left:928px;top:194px;width:10px;height:10px;background:#70a8a8"></div>
<div class="a" style="left:488px;top:205px;width:10px;height:10px;background:#8888cc"></div>
<div class="cell" style="left:499px;top:205px"><i style="flex:2;background:#ffa060"></i><i style="flex:4;background:#8888cc"></i><i style="flex:3;background:#007800"></i></div>
<div class="cell" style="left:510px;top:205px"><i style="flex:2;background:#ffa060"></i><i style="flex:3;background:#00ffff"></i><i style="flex:3;background:#8888cc"></i></div>
<div class="a" style="left:521px;top:205px;width:10px;height:10px;background:#70a8a8"></div>
<div class="a" style="left:532px;top:205px;width:10px;height:10px;background:#70a8a8"></div>
<div class="a" style="left:543px;top:205px;width:10px;height:10px;background:#70a8a8"></div>
<div class="a" style="left:554px;top:205px;width:10px;height:10px;background:#70a8a8"></div>
<div class="a" style="left:565px;top:205px;width:10px;height:10px;background:#70a8a8"></div>
<div class="a" style="left:576px;top:205px;width:10px;height:10px;background:#70a8a8"></div>
<div class="a" style="left:587px;top:205px;width:10px;height:10px;background:#70a8a8"></div>
<div class="a" style="left:598px;top:205px;width:10px;height:10px;background:#70a8a8"></div>
<div class="a" style="left:609px;top:205px;width:10px;height:10px;background:#70a8a8"></div>
<div class="cell" style="left:620px;top:205px"><i style="flex:3;background:#8888cc"></i><i style="flex:3;background:#ff0080"></i><i style="flex:3;background:#007800"></i></div>
<div class="cell" style="left:631px;top:205px"><i style="flex:3;background:#ffff00"></i><i style="flex:3;background:#8888cc"></i><i style="flex:3;background:#007800"></i></div>
<div class="a" style="left:642px;top:205px;width:10px;height:10px;background:#8888cc"></div>
<div class="a" style="left:653px;top:205px;width:10px;height:10px;background:#8888cc"></div>
<div class="a" style="left:664px;top:205px;width:10px;height:10px;background:#8888cc"></div>
<div class="cell" style="left:675px;top:205px"><i style="flex:3;background:#ffff00"></i><i style="flex:3;background:#8888cc"></i><i style="flex:3;background:#007800"></i></div>
<div class="cell" style="left:686px;top:205px"><i style="flex:4;background:#8888cc"></i><i style="flex:5;background:#007800"></i></div>
<div class="a" style="left:697px;top:205px;width:10px;height:10px;background:#8888cc"></div>
<div class="a" style="left:708px;top:205px;width:10px;height:10px;background:#8888cc"></div>
<div class="cell" style="left:719px;top:205px"><i style="flex:2;background:#0000e0"></i><i style="flex:3;background:#00ffff"></i><i style="flex:1;background:#8888cc"></i><i style="flex:3;background:#007800"></i></div>
<div class="cell" style="left:730px;top:205px"><i style="flex:2;background:#0000e0"></i><i style="flex:1;background:#8888cc"></i><i style="flex:3;background:#ff0080"></i><i style="flex:3;background:#007800"></i></div>
<div class="cell" style="left:741px;top:205px"><i style="flex:3;background:#0000e0"></i><i style="flex:3;background:#8888cc"></i><i style="flex:3;background:#007800"></i></div>
<div class="a" style="left:752px;top:205px;width:10px;height:10px;background:#70a8a8"></div>
<div class="a" style="left:763px;top:205px;width:10px;height:10px;background:#70a8a8"></div>
<div class="cell" style="left:774px;top:205px"><i style="flex:2;background:#0000e0"></i><i style="flex:3;background:#00ffff"></i><i style="flex:3;background:#007800"></i></div>
<div class="cell" style="left:785px;top:205px"><i style="flex:2;background:#0000e0"></i><i style="flex:3;background:#00ffff"></i><i style="flex:3;background:#007800"></i></div>
<div class="a" style="left:796px;top:205px;width:10px;height:10px;background:#8888cc"></div>
<div class="cell" style="left:807px;top:205px"><i style="flex:4;background:#ffff00"></i><i style="flex:5;background:#8888cc"></i></div>
<div class="a" style="left:818px;top:205px;width:10px;height:10px;background:#8888cc"></div>
<div class="cell" style="left:829px;top:205px"><i style="flex:4;background:#ffa060"></i><i style="flex:5;background:#8888cc"></i></div>
<div class="cell" style="left:840px;top:205px"><i style="flex:2;background:#0000e0"></i><i style="flex:2;background:#00ffff"></i><i style="flex:3;background:#ff0080"></i><i style="flex:2;background:#007800"></i></div>
<div class="cell" style="left:851px;top:205px"><i style="flex:3;background:#ff0000"></i><i style="flex:3;background:#8888cc"></i><i style="flex:3;background:#007800"></i></div>
<div class="cell" style="left:862px;top:205px"><i style="flex:4;background:#8888cc"></i><i style="flex:5;background:#007800"></i></div>
<div class="cell" style="left:873px;top:205px"><i style="flex:4;background:#8888cc"></i><i style="flex:5;background:#007800"></i></div>
<div class="cell" style="left:884px;top:205px"><i style="flex:4;background:#8888cc"></i><i style="flex:5;background:#007800"></i></div>
<div class="cell" style="left:895px;top:205px"><i style="flex:3;background:#0000e0"></i><i style="flex:3;background:#8888cc"></i><i style="flex:3;background:#007800"></i></div>
<div class="a" style="left:906px;top:205px;width:10px;height:10px;background:#8888cc"></div>
<div class="a" style="left:917px;top:205px;width:10px;height:10px;background:#70a8a8"></div>
<div class="a" style="left:928px;top:205px;width:10px;height:10px;background:#70a8a8"></div>
<div class="a" style="left:488px;top:216px;width:10px;height:10px;background:#70a8a8"></div>
<div class="cell" style="left:499px;top:216px"><i style="flex:4;background:#8888cc"></i><i style="flex:5;background:#007800"></i></div>
<div class="a" style="left:510px;top:216px;width:10px;height:10px;background:#70a8a8"></div>
<div class="a" style="left:521px;top:216px;width:10px;height:10px;background:#70a8a8"></div>
<div class="a" style="left:532px;top:216px;width:10px;height:10px;background:#70a8a8"></div>
<div class="a" style="left:543px;top:216px;width:10px;height:10px;background:#70a8a8"></div>
<div class="a" style="left:554px;top:216px;width:10px;height:10px;background:#70a8a8"></div>
<div class="cell" style="left:565px;top:216px"><i style="flex:3;background:#ffff00"></i><i style="flex:3;background:#8888cc"></i><i style="flex:3;background:#007800"></i></div>
<div class="a" style="left:576px;top:216px;width:10px;height:10px;background:#70a8a8"></div>
<div class="a" style="left:587px;top:216px;width:10px;height:10px;background:#8888cc"></div>
<div class="a" style="left:598px;top:216px;width:10px;height:10px;background:#70a8a8"></div>
<div class="a" style="left:609px;top:216px;width:10px;height:10px;background:#70a8a8"></div>
<div class="a" style="left:620px;top:216px;width:10px;height:10px;background:#70a8a8"></div>
<div class="a" style="left:631px;top:216px;width:10px;height:10px;background:#70a8a8"></div>
<div class="a" style="left:642px;top:216px;width:10px;height:10px;background:#70a8a8"></div>
<div class="a" style="left:653px;top:216px;width:10px;height:10px;background:#70a8a8"></div>
<div class="a" style="left:664px;top:216px;width:10px;height:10px;background:#70a8a8"></div>
<div class="a" style="left:675px;top:216px;width:10px;height:10px;background:#8888cc"></div>
<div class="a" style="left:686px;top:216px;width:10px;height:10px;background:#8888cc"></div>
<div class="a" style="left:697px;top:216px;width:10px;height:10px;background:#70a8a8"></div>
<div class="a" style="left:708px;top:216px;width:10px;height:10px;background:#70a8a8"></div>
<div class="a" style="left:719px;top:216px;width:10px;height:10px;background:#70a8a8"></div>
<div class="a" style="left:730px;top:216px;width:10px;height:10px;background:#70a8a8"></div>
<div class="a" style="left:741px;top:216px;width:10px;height:10px;background:#8888cc"></div>
<div class="a" style="left:752px;top:216px;width:10px;height:10px;background:#70a8a8"></div>
<div class="a" style="left:763px;top:216px;width:10px;height:10px;background:#8888cc"></div>
<div class="cell" style="left:774px;top:216px"><i style="flex:4;background:#8888cc"></i><i style="flex:5;background:#007800"></i></div>
<div class="a" style="left:785px;top:216px;width:10px;height:10px;background:#70a8a8"></div>
<div class="a" style="left:796px;top:216px;width:10px;height:10px;background:#8888cc"></div>
<div class="cell" style="left:807px;top:216px"><i style="flex:3;background:#8888cc"></i><i style="flex:3;background:#ff0080"></i><i style="flex:3;background:#007800"></i></div>
<div class="cell" style="left:818px;top:216px"><i style="flex:2;background:#80ffc0"></i><i style="flex:2;background:#8888cc"></i><i style="flex:3;background:#ff0080"></i><i style="flex:2;background:#007800"></i></div>
<div class="a" style="left:829px;top:216px;width:10px;height:10px;background:#70a8a8"></div>
<div class="cell" style="left:840px;top:216px"><i style="flex:4;background:#0000e0"></i><i style="flex:5;background:#8888cc"></i></div>
<div class="a" style="left:851px;top:216px;width:10px;height:10px;background:#70a8a8"></div>
<div class="a" style="left:862px;top:216px;width:10px;height:10px;background:#70a8a8"></div>
<div class="a" style="left:873px;top:216px;width:10px;height:10px;background:#70a8a8"></div>
<div class="a" style="left:884px;top:216px;width:10px;height:10px;background:#70a8a8"></div>
<div class="a" style="left:895px;top:216px;width:10px;height:10px;background:#70a8a8"></div>
<div class="a" style="left:906px;top:216px;width:10px;height:10px;background:#70a8a8"></div>
<div class="a" style="left:917px;top:216px;width:10px;height:10px;background:#70a8a8"></div>
<div class="a" style="left:928px;top:216px;width:10px;height:10px;background:#70a8a8"></div>
<div class="a" style="left:488px;top:227px;width:10px;height:10px;background:#70a8a8"></div>
<div class="a" style="left:499px;top:227px;width:10px;height:10px;background:#70a8a8"></div>
<div class="a" style="left:510px;top:227px;width:10px;height:10px;background:#70a8a8"></div>
<div class="a" style="left:521px;top:227px;width:10px;height:10px;background:#70a8a8"></div>
<div class="a" style="left:532px;top:227px;width:10px;height:10px;background:#70a8a8"></div>
<div class="a" style="left:543px;top:227px;width:10px;height:10px;background:#70a8a8"></div>
<div class="a" style="left:554px;top:227px;width:10px;height:10px;background:#70a8a8"></div>
<div class="a" style="left:565px;top:227px;width:10px;height:10px;background:#70a8a8"></div>
<div class="a" style="left:576px;top:227px;width:10px;height:10px;background:#70a8a8"></div>
<div class="a" style="left:587px;top:227px;width:10px;height:10px;background:#70a8a8"></div>
<div class="a" style="left:598px;top:227px;width:10px;height:10px;background:#8888cc"></div>
<div class="cell" style="left:609px;top:227px"><i style="flex:4;background:#8888cc"></i><i style="flex:5;background:#007800"></i></div>
<div class="a" style="left:620px;top:227px;width:10px;height:10px;background:#8888cc"></div>
<div class="cell" style="left:631px;top:227px"><i style="flex:4;background:#0000e0"></i><i style="flex:5;background:#8888cc"></i></div>
<div class="cell" style="left:642px;top:227px"><i style="flex:4;background:#8888cc"></i><i style="flex:5;background:#007800"></i></div>
<div class="a" style="left:653px;top:227px;width:10px;height:10px;background:#70a8a8"></div>
<div class="a" style="left:664px;top:227px;width:10px;height:10px;background:#8888cc"></div>
<div class="cell" style="left:675px;top:227px"><i style="flex:3;background:#0000e0"></i><i style="flex:3;background:#8888cc"></i><i style="flex:3;background:#007800"></i></div>
<div class="a" style="left:686px;top:227px;width:10px;height:10px;background:#8888cc"></div>
<div class="a" style="left:697px;top:227px;width:10px;height:10px;background:#8888cc"></div>
<div class="a" style="left:708px;top:227px;width:10px;height:10px;background:#70a8a8"></div>
<div class="a" style="left:719px;top:227px;width:10px;height:10px;background:#70a8a8"></div>
<div class="a" style="left:730px;top:227px;width:10px;height:10px;background:#70a8a8"></div>
<div class="a" style="left:741px;top:227px;width:10px;height:10px;background:#70a8a8"></div>
<div class="a" style="left:752px;top:227px;width:10px;height:10px;background:#70a8a8"></div>
<div class="a" style="left:763px;top:227px;width:10px;height:10px;background:#8888cc"></div>
<div class="a" style="left:774px;top:227px;width:10px;height:10px;background:#70a8a8"></div>
<div class="a" style="left:785px;top:227px;width:10px;height:10px;background:#70a8a8"></div>
<div class="a" style="left:796px;top:227px;width:10px;height:10px;background:#70a8a8"></div>
<div class="a" style="left:807px;top:227px;width:10px;height:10px;background:#70a8a8"></div>
<div class="a" style="left:818px;top:227px;width:10px;height:10px;background:#70a8a8"></div>
<div class="a" style="left:829px;top:227px;width:10px;height:10px;background:#70a8a8"></div>
<div class="a" style="left:840px;top:227px;width:10px;height:10px;background:#70a8a8"></div>
<div class="a" style="left:851px;top:227px;width:10px;height:10px;background:#8888cc"></div>
<div class="a" style="left:862px;top:227px;width:10px;height:10px;background:#8888cc"></div>
<div class="a" style="left:873px;top:227px;width:10px;height:10px;background:#70a8a8"></div>
<div class="a" style="left:884px;top:227px;width:10px;height:10px;background:#8888cc"></div>
<div class="cell" style="left:895px;top:227px"><i style="flex:4;background:#8888cc"></i><i style="flex:5;background:#007800"></i></div>
<div class="cell" style="left:906px;top:227px"><i style="flex:2;background:#ffa060"></i><i style="flex:2;background:#0000e0"></i><i style="flex:2;background:#00ffff"></i><i style="flex:3;background:#8888cc"></i></div>
<div class="a" style="left:917px;top:227px;width:10px;height:10px;background:#70a8a8"></div>
<div class="a" style="left:928px;top:227px;width:10px;height:10px;background:#70a8a8"></div>
<div class="a" style="left:488px;top:238px;width:10px;height:10px;background:#70a8a8"></div>
<div class="a" style="left:499px;top:238px;width:10px;height:10px;background:#8888cc"></div>
<div class="a" style="left:510px;top:238px;width:10px;height:10px;background:#8888cc"></div>
<div class="a" style="left:521px;top:238px;width:10px;height:10px;background:#8888cc"></div>
<div class="cell" style="left:532px;top:238px"><i style="flex:3;background:#0000e0"></i><i style="flex:3;background:#8888cc"></i><i style="flex:3;background:#ff0080"></i></div>
<div class="cell" style="left:543px;top:238px"><i style="flex:4;background:#8888cc"></i><i style="flex:5;background:#ff0080"></i></div>
<div class="a" style="left:554px;top:238px;width:10px;height:10px;background:#8888cc"></div>
<div class="a" style="left:565px;top:238px;width:10px;height:10px;background:#70a8a8"></div>
<div class="cell" style="left:576px;top:238px"><i style="flex:2;background:#ff0000"></i><i style="flex:3;background:#8888cc"></i><i style="flex:3;background:#007800"></i></div>
<div class="cell" style="left:587px;top:238px"><i style="flex:3;background:#ff0000"></i><i style="flex:4;background:#8888cc"></i></div>
<div class="a" style="left:598px;top:238px;width:10px;height:10px;background:#70a8a8"></div>
<div class="cell" style="left:609px;top:238px"><i style="flex:4;background:#8888cc"></i><i style="flex:5;background:#007800"></i></div>
<div class="a" style="left:620px;top:238px;width:10px;height:10px;background:#70a8a8"></div>
<div class="a" style="left:631px;top:238px;width:10px;height:10px;background:#70a8a8"></div>
<div class="a" style="left:642px;top:238px;width:10px;height:10px;background:#70a8a8"></div>
<div class="a" style="left:653px;top:238px;width:10px;height:10px;background:#70a8a8"></div>
<div class="a" style="left:664px;top:238px;width:10px;height:10px;background:#70a8a8"></div>
<div class="a" style="left:675px;top:238px;width:10px;height:10px;background:#70a8a8"></div>
<div class="a" style="left:686px;top:238px;width:10px;height:10px;background:#70a8a8"></div>
<div class="a" style="left:697px;top:238px;width:10px;height:10px;background:#70a8a8"></div>
<div class="a" style="left:708px;top:238px;width:10px;height:10px;background:#70a8a8"></div>
<div class="a" style="left:719px;top:238px;width:10px;height:10px;background:#70a8a8"></div>
<div class="a" style="left:730px;top:238px;width:10px;height:10px;background:#70a8a8"></div>
<div class="a" style="left:741px;top:238px;width:10px;height:10px;background:#70a8a8"></div>
<div class="a" style="left:752px;top:238px;width:10px;height:10px;background:#70a8a8"></div>
<div class="a" style="left:763px;top:238px;width:10px;height:10px;background:#70a8a8"></div>
<div class="a" style="left:774px;top:238px;width:10px;height:10px;background:#70a8a8"></div>
<div class="a" style="left:785px;top:238px;width:10px;height:10px;background:#70a8a8"></div>
<div class="a" style="left:796px;top:238px;width:10px;height:10px;background:#70a8a8"></div>
<div class="a" style="left:807px;top:238px;width:10px;height:10px;background:#70a8a8"></div>
<div class="a" style="left:818px;top:238px;width:10px;height:10px;background:#70a8a8"></div>
<div class="a" style="left:829px;top:238px;width:10px;height:10px;background:#70a8a8"></div>
<div class="a" style="left:840px;top:238px;width:10px;height:10px;background:#70a8a8"></div>
<div class="a" style="left:851px;top:238px;width:10px;height:10px;background:#70a8a8"></div>
<div class="a" style="left:862px;top:238px;width:10px;height:10px;background:#70a8a8"></div>
<div class="a" style="left:873px;top:238px;width:10px;height:10px;background:#70a8a8"></div>
<div class="a" style="left:884px;top:238px;width:10px;height:10px;background:#70a8a8"></div>
<div class="a" style="left:895px;top:238px;width:10px;height:10px;background:#70a8a8"></div>
<div class="a" style="left:906px;top:238px;width:10px;height:10px;background:#70a8a8"></div>
<div class="a" style="left:917px;top:238px;width:10px;height:10px;background:#70a8a8"></div>
<div class="a" style="left:928px;top:238px;width:10px;height:10px;background:#70a8a8"></div>
<div class="a" style="left:488px;top:249px;width:10px;height:10px;background:#70a8a8"></div>
<div class="a" style="left:499px;top:249px;width:10px;height:10px;background:#70a8a8"></div>
<div class="a" style="left:510px;top:249px;width:10px;height:10px;background:#70a8a8"></div>
<div class="a" style="left:521px;top:249px;width:10px;height:10px;background:#70a8a8"></div>
<div class="a" style="left:532px;top:249px;width:10px;height:10px;background:#70a8a8"></div>
<div class="a" style="left:543px;top:249px;width:10px;height:10px;background:#70a8a8"></div>
<div class="a" style="left:554px;top:249px;width:10px;height:10px;background:#70a8a8"></div>
<div class="a" style="left:565px;top:249px;width:10px;height:10px;background:#70a8a8"></div>
<div class="a" style="left:576px;top:249px;width:10px;height:10px;background:#70a8a8"></div>
<div class="a" style="left:587px;top:249px;width:10px;height:10px;background:#70a8a8"></div>
<div class="a" style="left:598px;top:249px;width:10px;height:10px;background:#70a8a8"></div>
<div class="a" style="left:609px;top:249px;width:10px;height:10px;background:#70a8a8"></div>
<div class="a" style="left:620px;top:249px;width:10px;height:10px;background:#70a8a8"></div>
<div class="a" style="left:631px;top:249px;width:10px;height:10px;background:#70a8a8"></div>
<div class="a" style="left:642px;top:249px;width:10px;height:10px;background:#70a8a8"></div>
<div class="a" style="left:653px;top:249px;width:10px;height:10px;background:#70a8a8"></div>
<div class="a" style="left:664px;top:249px;width:10px;height:10px;background:#70a8a8"></div>
<div class="a" style="left:675px;top:249px;width:10px;height:10px;background:#70a8a8"></div>
<div class="a" style="left:686px;top:249px;width:10px;height:10px;background:#70a8a8"></div>
<div class="a" style="left:697px;top:249px;width:10px;height:10px;background:#70a8a8"></div>
<div class="a" style="left:708px;top:249px;width:10px;height:10px;background:#70a8a8"></div>
<div class="a" style="left:719px;top:249px;width:10px;height:10px;background:#70a8a8"></div>
<div class="a" style="left:730px;top:249px;width:10px;height:10px;background:#70a8a8"></div>
<div class="a" style="left:741px;top:249px;width:10px;height:10px;background:#70a8a8"></div>
<div class="a" style="left:752px;top:249px;width:10px;height:10px;background:#70a8a8"></div>
<div class="a" style="left:763px;top:249px;width:10px;height:10px;background:#70a8a8"></div>
<div class="a" style="left:774px;top:249px;width:10px;height:10px;background:#70a8a8"></div>
<div class="a" style="left:785px;top:249px;width:10px;height:10px;background:#70a8a8"></div>
<div class="a" style="left:796px;top:249px;width:10px;height:10px;background:#70a8a8"></div>
<div class="a" style="left:807px;top:249px;width:10px;height:10px;background:#70a8a8"></div>
<div class="a" style="left:818px;top:249px;width:10px;height:10px;background:#70a8a8"></div>
<div class="a" style="left:829px;top:249px;width:10px;height:10px;background:#70a8a8"></div>
<div class="a" style="left:840px;top:249px;width:10px;height:10px;background:#70a8a8"></div>
<div class="a" style="left:851px;top:249px;width:10px;height:10px;background:#70a8a8"></div>
<div class="a" style="left:862px;top:249px;width:10px;height:10px;background:#70a8a8"></div>
<div class="a" style="left:873px;top:249px;width:10px;height:10px;background:#70a8a8"></div>
<div class="a" style="left:884px;top:249px;width:10px;height:10px;background:#70a8a8"></div>
<div class="a" style="left:895px;top:249px;width:10px;height:10px;background:#70a8a8"></div>
<div class="a" style="left:906px;top:249px;width:10px;height:10px;background:#70a8a8"></div>
<div class="a" style="left:917px;top:249px;width:10px;height:10px;background:#70a8a8"></div>
<div class="a" style="left:928px;top:249px;width:10px;height:10px;background:#70a8a8"></div>
<div class="a" style="left:488px;top:260px;width:10px;height:10px;background:#70a8a8"></div>
<div class="a" style="left:499px;top:260px;width:10px;height:10px;background:#70a8a8"></div>
<div class="a" style="left:510px;top:260px;width:10px;height:10px;background:#70a8a8"></div>
<div class="a" style="left:521px;top:260px;width:10px;height:10px;background:#70a8a8"></div>
<div class="a" style="left:532px;top:260px;width:10px;height:10px;background:#70a8a8"></div>
<div class="a" style="left:543px;top:260px;width:10px;height:10px;background:#70a8a8"></div>
<div class="a" style="left:554px;top:260px;width:10px;height:10px;background:#70a8a8"></div>
<div class="a" style="left:565px;top:260px;width:10px;height:10px;background:#70a8a8"></div>
<div class="a" style="left:576px;top:260px;width:10px;height:10px;background:#70a8a8"></div>
<div class="a" style="left:587px;top:260px;width:10px;height:10px;background:#70a8a8"></div>
<div class="a" style="left:598px;top:260px;width:10px;height:10px;background:#70a8a8"></div>
<div class="a" style="left:609px;top:260px;width:10px;height:10px;background:#70a8a8"></div>
<div class="a" style="left:620px;top:260px;width:10px;height:10px;background:#70a8a8"></div>
<div class="a" style="left:631px;top:260px;width:10px;height:10px;background:#70a8a8"></div>
<div class="a" style="left:642px;top:260px;width:10px;height:10px;background:#70a8a8"></div>
<div class="a" style="left:653px;top:260px;width:10px;height:10px;background:#70a8a8"></div>
<div class="a" style="left:664px;top:260px;width:10px;height:10px;background:#70a8a8"></div>
<div class="a" style="left:675px;top:260px;width:10px;height:10px;background:#70a8a8"></div>
<div class="a" style="left:686px;top:260px;width:10px;height:10px;background:#70a8a8"></div>
<div class="a" style="left:697px;top:260px;width:10px;height:10px;background:#70a8a8"></div>
<div class="a" style="left:708px;top:260px;width:10px;height:10px;background:#70a8a8"></div>
<div class="a" style="left:719px;top:260px;width:10px;height:10px;background:#70a8a8"></div>
<div class="a" style="left:730px;top:260px;width:10px;height:10px;background:#70a8a8"></div>
<div class="a" style="left:741px;top:260px;width:10px;height:10px;background:#70a8a8"></div>
<div class="a" style="left:752px;top:260px;width:10px;height:10px;background:#70a8a8"></div>
<div class="a" style="left:763px;top:260px;width:10px;height:10px;background:#70a8a8"></div>
<div class="a" style="left:774px;top:260px;width:10px;height:10px;background:#70a8a8"></div>
<div class="a" style="left:785px;top:260px;width:10px;height:10px;background:#70a8a8"></div>
<div class="a" style="left:796px;top:260px;width:10px;height:10px;background:#70a8a8"></div>
<div class="a" style="left:807px;top:260px;width:10px;height:10px;background:#70a8a8"></div>
<div class="a" style="left:818px;top:260px;width:10px;height:10px;background:#70a8a8"></div>
<div class="a" style="left:829px;top:260px;width:10px;height:10px;background:#70a8a8"></div>
<div class="a" style="left:840px;top:260px;width:10px;height:10px;background:#70a8a8"></div>
<div class="a" style="left:851px;top:260px;width:10px;height:10px;background:#70a8a8"></div>
<div class="a" style="left:862px;top:260px;width:10px;height:10px;background:#70a8a8"></div>
<div class="a" style="left:873px;top:260px;width:10px;height:10px;background:#70a8a8"></div>
<div class="a" style="left:884px;top:260px;width:10px;height:10px;background:#70a8a8"></div>
<div class="a" style="left:895px;top:260px;width:10px;height:10px;background:#70a8a8"></div>
<div class="a" style="left:906px;top:260px;width:10px;height:10px;background:#70a8a8"></div>
<div class="a" style="left:917px;top:260px;width:10px;height:10px;background:#70a8a8"></div>
<div class="a" style="left:928px;top:260px;width:10px;height:10px;background:#70a8a8"></div>
<div class="a" style="left:488px;top:271px;width:10px;height:10px;background:#70a8a8"></div>
<div class="a" style="left:499px;top:271px;width:10px;height:10px;background:#70a8a8"></div>
<div class="a" style="left:510px;top:271px;width:10px;height:10px;background:#70a8a8"></div>
<div class="a" style="left:521px;top:271px;width:10px;height:10px;background:#70a8a8"></div>
<div class="a" style="left:532px;top:271px;width:10px;height:10px;background:#70a8a8"></div>
<div class="a" style="left:543px;top:271px;width:10px;height:10px;background:#70a8a8"></div>
<div class="a" style="left:554px;top:271px;width:10px;height:10px;background:#70a8a8"></div>
<div class="a" style="left:565px;top:271px;width:10px;height:10px;background:#70a8a8"></div>
<div class="a" style="left:576px;top:271px;width:10px;height:10px;background:#70a8a8"></div>
<div class="a" style="left:587px;top:271px;width:10px;height:10px;background:#70a8a8"></div>
<div class="a" style="left:598px;top:271px;width:10px;height:10px;background:#70a8a8"></div>
<div class="a" style="left:609px;top:271px;width:10px;height:10px;background:#70a8a8"></div>
<div class="a" style="left:620px;top:271px;width:10px;height:10px;background:#70a8a8"></div>
<div class="a" style="left:631px;top:271px;width:10px;height:10px;background:#70a8a8"></div>
<div class="a" style="left:642px;top:271px;width:10px;height:10px;background:#70a8a8"></div>
<div class="a" style="left:653px;top:271px;width:10px;height:10px;background:#70a8a8"></div>
<div class="a" style="left:664px;top:271px;width:10px;height:10px;background:#70a8a8"></div>
<div class="a" style="left:675px;top:271px;width:10px;height:10px;background:#70a8a8"></div>
<div class="a" style="left:686px;top:271px;width:10px;height:10px;background:#70a8a8"></div>
<div class="a" style="left:697px;top:271px;width:10px;height:10px;background:#70a8a8"></div>
<div class="a" style="left:708px;top:271px;width:10px;height:10px;background:#70a8a8"></div>
<div class="a" style="left:719px;top:271px;width:10px;height:10px;background:#70a8a8"></div>
<div class="a" style="left:730px;top:271px;width:10px;height:10px;background:#70a8a8"></div>
<div class="a" style="left:741px;top:271px;width:10px;height:10px;background:#70a8a8"></div>
<div class="a" style="left:752px;top:271px;width:10px;height:10px;background:#70a8a8"></div>
<div class="a" style="left:763px;top:271px;width:10px;height:10px;background:#70a8a8"></div>
<div class="a" style="left:774px;top:271px;width:10px;height:10px;background:#70a8a8"></div>
<div class="a" style="left:785px;top:271px;width:10px;height:10px;background:#70a8a8"></div>
<div class="a" style="left:796px;top:271px;width:10px;height:10px;background:#70a8a8"></div>
<div class="a" style="left:807px;top:271px;width:10px;height:10px;background:#70a8a8"></div>
<div class="a" style="left:818px;top:271px;width:10px;height:10px;background:#70a8a8"></div>
<div class="a" style="left:829px;top:271px;width:10px;height:10px;background:#70a8a8"></div>
<div class="a" style="left:840px;top:271px;width:10px;height:10px;background:#70a8a8"></div>
<div class="a" style="left:851px;top:271px;width:10px;height:10px;background:#70a8a8"></div>
<div class="a" style="left:862px;top:271px;width:10px;height:10px;background:#70a8a8"></div>
<div class="a" style="left:873px;top:271px;width:10px;height:10px;background:#70a8a8"></div>
<div class="a" style="left:884px;top:271px;width:10px;height:10px;background:#70a8a8"></div>
<div class="a" style="left:895px;top:271px;width:10px;height:10px;background:#70a8a8"></div>
<div class="a" style="left:906px;top:271px;width:10px;height:10px;background:#70a8a8"></div>
<div class="a" style="left:917px;top:271px;width:10px;height:10px;background:#70a8a8"></div>
<div class="a" style="left:928px;top:271px;width:10px;height:10px;background:#70a8a8"></div>
<div class="a" style="left:941px;top:139px;width:17px;height:352px;background:#f0f0f0;border-left:1px solid #fff"></div>
<div class="a" style="left:942px;top:156px;width:15px;height:317px;background:#cdcdcd"></div>
<svg style="left:945px;top:145px" width="9" height="6" viewBox="0 0 9 6"><path d="M1 5.5 L4.5 1.5 L8 5.5" fill="none" stroke="#505050" stroke-width="2.2"/></svg>
<svg style="left:945px;top:480px" width="9" height="6" viewBox="0 0 9 6"><path d="M1 0.5 L4.5 4.5 L8 0.5" fill="none" stroke="#505050" stroke-width="2.2"/></svg>
<div class="a" style="left:496px;top:292px;width:10px;height:10px;background:#c0c0c0"></div>
<div class="t" style="left:512px;top:290px;"><span class="cj">未使用</span></div>
<div class="a" style="left:496px;top:307px;width:10px;height:10px;background:#ff0000"></div>
<div class="m" style="left:512px;top:305px;">NTFS MFT<span style="letter-spacing:0"><span class="cj">范围</span></span></div>
<div class="m" style="left:635px;top:305px;">27</div>
<div class="a" style="left:496px;top:322px;width:10px;height:10px;background:#00ff00"></div>
<div class="m" style="left:512px;top:320px;">NTFS<span style="letter-spacing:0"><span class="cj">启动扇区</span></span></div>
<div class="m" style="left:635px;top:320px;">1</div>
<div class="a" style="left:496px;top:337px;width:10px;height:10px;background:#8080c0"></div>
<div class="m" style="left:512px;top:335px;">NTFS LogFile</div>
<div class="m" style="left:635px;top:335px;">1</div>
<div class="a" style="left:496px;top:352px;width:10px;height:10px;background:#ff80ff"></div>
<div class="m" style="left:512px;top:350px;">ReFS MetaBlock</div>
<div class="m" style="left:635px;top:350px;">0</div>
<div class="a" style="left:496px;top:367px;width:10px;height:10px;background:#ffff00"></div>
<div class="m" style="left:512px;top:365px;">FAT<span style="letter-spacing:0"><span class="cj">目录条目</span></span></div>
<div class="m" style="left:635px;top:365px;">77</div>
<div class="a" style="left:496px;top:382px;width:10px;height:10px;background:#00ffff"></div>
<div class="m" style="left:512px;top:380px;">Ext2/Ext3/Ext4<span style="letter-spacing:0"><span class="cj">超级块</span></span></div>
<div class="m" style="left:635px;top:380px;">1981</div>
<div class="a" style="left:496px;top:397px;width:10px;height:10px;background:#0080ff"></div>
<div class="m" style="left:512px;top:395px;">UFS/FFS<span style="letter-spacing:0"><span class="cj">超级块</span></span></div>
<div class="m" style="left:635px;top:395px;">0</div>
<div class="a" style="left:496px;top:412px;width:10px;height:10px;background:#c0c0ff"></div>
<div class="m" style="left:512px;top:410px;">UFS/FFS<span style="letter-spacing:0"><span class="cj">目录条目</span></span></div>
<div class="m" style="left:635px;top:410px;">0</div>
<div class="a" style="left:496px;top:427px;width:10px;height:10px;background:#ff0080"></div>
<div class="m" style="left:512px;top:425px;">HFS/HFS+ BTree+ <span style="letter-spacing:0"><span class="cj">范围</span></span></div>
<div class="m" style="left:635px;top:425px;">70</div>
<div class="a" style="left:496px;top:442px;width:10px;height:10px;background:#80ffa0"></div>
<div class="m" style="left:512px;top:440px;">APFS VolumeBlock</div>
<div class="m" style="left:635px;top:440px;">0</div>
<div class="a" style="left:496px;top:457px;width:10px;height:10px;background:#80ffff"></div>
<div class="m" style="left:512px;top:455px;">APFS BitmapRoot</div>
<div class="m" style="left:635px;top:455px;">1</div>
<div class="a" style="left:496px;top:472px;width:10px;height:10px;background:#606060"></div>
<div class="m" style="left:512px;top:470px;">ISO9660<span style="letter-spacing:0"><span class="cj">目录条目</span></span></div>
<div class="m" style="left:635px;top:470px;">0</div>
<div class="a" style="left:704px;top:292px;width:10px;height:10px;background:#70a8a8"></div>
<div class="t" style="left:720px;top:290px;"><span class="cj">未识别</span></div>
<div class="a" style="left:704px;top:307px;width:10px;height:10px;background:#007000"></div>
<div class="m" style="left:720px;top:305px;">NTFS<span style="letter-spacing:0"><span class="cj">目录条目</span></span></div>
<div class="m" style="left:866px;top:305px;">9648</div>
<div class="a" style="left:704px;top:322px;width:10px;height:10px;background:#00b000"></div>
<div class="m" style="left:720px;top:320px;">NTFS<span style="letter-spacing:0"><span class="cj">恢复点</span></span></div>
<div class="m" style="left:866px;top:320px;">0</div>
<div class="a" style="left:704px;top:337px;width:10px;height:10px;background:#ff6060"></div>
<div class="m" style="left:720px;top:335px;">ReFS BootRecord</div>
<div class="m" style="left:866px;top:335px;">0</div>
<div class="a" style="left:704px;top:352px;width:10px;height:10px;background:#0000ff"></div>
<div class="m" style="left:720px;top:350px;">FAT <span style="letter-spacing:0"><span class="cj">表格项</span></span></div>
<div class="m" style="left:866px;top:350px;">1225</div>
<div class="a" style="left:704px;top:367px;width:10px;height:10px;background:#008080"></div>
<div class="m" style="left:720px;top:365px;">FAT<span style="letter-spacing:0"><span class="cj">启动扇区</span></span></div>
<div class="m" style="left:866px;top:365px;">0</div>
<div class="a" style="left:704px;top:382px;width:10px;height:10px;background:#ffa060"></div>
<div class="m" style="left:720px;top:380px;">Ext2/Ext3/Ext4<span style="letter-spacing:0"><span class="cj">目录条目</span></span></div>
<div class="m" style="left:866px;top:380px;">4305</div>
<div class="a" style="left:704px;top:397px;width:10px;height:10px;background:#800000"></div>
<div class="m" style="left:720px;top:395px;">UFS/FFS <span style="letter-spacing:0"><span class="cj">柱面组</span></span></div>
<div class="m" style="left:866px;top:395px;">0</div>
<div class="a" style="left:704px;top:412px;width:10px;height:10px;background:#808000"></div>
<div class="m" style="left:720px;top:410px;">HFS/HFS+ VolumeHeader</div>
<div class="m" style="left:866px;top:410px;">2</div>
<div class="a" style="left:704px;top:427px;width:10px;height:10px;background:#80ff80"></div>
<div class="m" style="left:720px;top:425px;">APFS<span style="letter-spacing:0"><span class="cj">超级块</span></span></div>
<div class="m" style="left:866px;top:425px;">0</div>
<div class="a" style="left:704px;top:442px;width:10px;height:10px;background:#80ffc0"></div>
<div class="m" style="left:720px;top:440px;">APFS<span style="letter-spacing:0"><span class="cj">个节点</span></span></div>
<div class="m" style="left:866px;top:440px;">5</div>
<div class="a" style="left:704px;top:457px;width:10px;height:10px;background:#303030"></div>
<div class="m" style="left:720px;top:455px;">ISO9660 VolumeDescriptor</div>
<div class="m" style="left:866px;top:455px;">0</div>
<div class="a" style="left:704px;top:472px;width:10px;height:10px;background:#8080c0"></div>
<div class="m" style="left:720px;top:470px;"><span style="letter-spacing:0"><span class="cj">特定档案文件</span></span></div>
<div class="m" style="left:866px;top:470px;">509021</div>
<div class="a" style="left:486px;top:494px;width:65px;height:21px;background:#f0f0f0;border:1px solid #dcdcdc;border-top:none"></div>
<div class="a" style="left:551px;top:494px;width:93px;height:23px;background:#fff;border:1px solid #dcdcdc;border-top:none"></div>
<svg style="left:495px;top:496px" width="18" height="18" viewBox="0 0 18 18">
<rect x="5.5" y="5.5" width="11" height="11" fill="#dadada" stroke="#8a8a8a"/><rect x="6.5" y="13" width="9" height="2.5" fill="#f2f2f2" stroke="#a0a0a0" stroke-width="0.6"/>
<circle cx="6.5" cy="6.5" r="5.6" fill="#eef3f8" stroke="#a8b4c4" stroke-width="0.9"/><rect x="5.6" y="5" width="1.9" height="4.8" fill="#3b6d85"/><rect x="5.6" y="2.4" width="1.9" height="1.6" fill="#3b5560"/>
</svg>
<div class="t" style="left:516px;top:498px;"><span class="cj">属性</span></div>
<svg style="left:563px;top:498px" width="17" height="16" viewBox="0 0 17 16">
<path d="M0.5 0.5 H15.5 V10.5 H9 L6 14 V10.5 H0.5 Z" fill="#eaf4fb" stroke="#8fb4cc"/>
<path d="M3 3.5h2 M6 3.5h2 M9 3.5h2 M12 3.5h2 M3 6h2 M6 6h2 M9 6h2 M12 6h2 M3 8.5h2 M6 8.5h2 M9 8.5h2 M12 8.5h2" stroke="#c04040" stroke-width="1.2"/>
<path d="M3 3.5h2 M9 6h2 M12 8.5h2" stroke="#3060c0" stroke-width="1.2"/>
</svg>
<div class="t" style="left:583px;top:498px;"><span class="cj">扫描信息</span></div>
<div class="a" style="left:1px;top:523px;width:960px;height:136px;background:#fff;border:2px solid #8c8c8c;border-left-width:2px"></div>
<div class="a" style="left:3px;top:525px;width:956px;height:20px;background:#c4c4c4"></div>
<div class="t" style="left:7px;top:527px;"><span class="cj">日志</span></div>
<svg style="left:945px;top:530px" width="9" height="8" viewBox="0 0 9 8"><path d="M0.8 0.5 L8.2 7.5 M8.2 0.5 L0.8 7.5" stroke="#000" stroke-width="1.5"/></svg>
<div class="t" style="left:3px;top:550px;width:99px;text-align:center"><span class="cj">类型</span></div>
<div class="t" style="left:102px;top:550px;width:100px;text-align:center"><span class="cj">日期</span></div>
<div class="t" style="left:202px;top:550px;width:100px;text-align:center"><span class="cj">时间</span></div>
<div class="t" style="left:302px;top:550px;width:657px;text-align:center"><span class="cj">文本</span></div>
<div class="a" style="left:3px;top:570px;width:956px;height:16px;background:#d9d9d9"></div>
<div class="a" style="left:3px;top:601px;width:956px;height:1px;background:#e2e2e2"></div>
<div class="a" style="left:102px;top:545px;width:1px;height:56px;background:#e2e2e2"></div>
<div class="a" style="left:202px;top:545px;width:1px;height:56px;background:#e2e2e2"></div>
<div class="a" style="left:302px;top:545px;width:1px;height:56px;background:#e2e2e2"></div>
<svg style="left:7px;top:569px" width="16" height="16" viewBox="0 0 16 16"><path d="M8 1 C12 1 15 3.5 15 7 C15 10 12.5 12.3 9.5 12.8 L10 15.5 L6 12.7 C3 12 1 10 1 7 C1 3.5 4 1 8 1 Z" fill="#d8ecfb" stroke="#6c9ac4"/><rect x="7" y="6" width="2" height="5" fill="#2a73c0"/><circle cx="8" cy="4" r="1.1" fill="#2a73c0"/></svg>
<div class="t" style="left:29px;top:571px;"><span class="cj">系统</span></div>
<div class="t" style="left:106px;top:571px;">2020/12/7</div>
<div class="t" style="left:206px;top:571px;">9:56:37</div>
<div class="t" style="left:306px;top:571px;">8m 12s <span class="cj">的</span> D: <span class="cj">扫描已完成</span></div>
<svg style="left:7px;top:585px" width="16" height="16" viewBox="0 0 16 16"><path d="M8 1 C12 1 15 3.5 15 7 C15 10 12.5 12.3 9.5 12.8 L10 15.5 L6 12.7 C3 12 1 10 1 7 C1 3.5 4 1 8 1 Z" fill="#d8ecfb" stroke="#6c9ac4"/><rect x="7" y="6" width="2" height="5" fill="#2a73c0"/><circle cx="8" cy="4" r="1.1" fill="#2a73c0"/></svg>
<div class="t" style="left:29px;top:587px;"><span class="cj">系统</span></div>
<div class="t" style="left:106px;top:587px;">2020/12/7</div>
<div class="t" style="left:206px;top:587px;">9:58:19</div>
<div class="t" style="left:306px;top:587px;"><span class="cj">文件枚举在</span>9<span class="cj">秒内完成</span></div>
<div class="a" style="left:0px;top:659px;width:962px;height:23px;background:#f0f0f0"></div>
<div class="t" style="left:3px;top:663px;"><span class="cj">准备</span></div>
<div class="a" style="left:942px;top:661px;width:1px;height:18px;background:#d6d6d6"></div>
<div class="a" style="left:956px;top:671px;width:2px;height:2px;background:#9a9a9a"></div>
<div class="a" style="left:953px;top:674px;width:2px;height:2px;background:#9a9a9a"></div>
<div class="a" style="left:956px;top:674px;width:2px;height:2px;background:#9a9a9a"></div>
<div class="a" style="left:950px;top:677px;width:2px;height:2px;background:#9a9a9a"></div>
<div class="a" style="left:953px;top:677px;width:2px;height:2px;background:#9a9a9a"></div>
<div class="a" style="left:956px;top:677px;width:2px;height:2px;background:#9a9a9a"></div>
<div class="a" style="left:0px;top:0px;width:962px;height:682px;border:1px solid #8a8a8a"></div></body></html>
